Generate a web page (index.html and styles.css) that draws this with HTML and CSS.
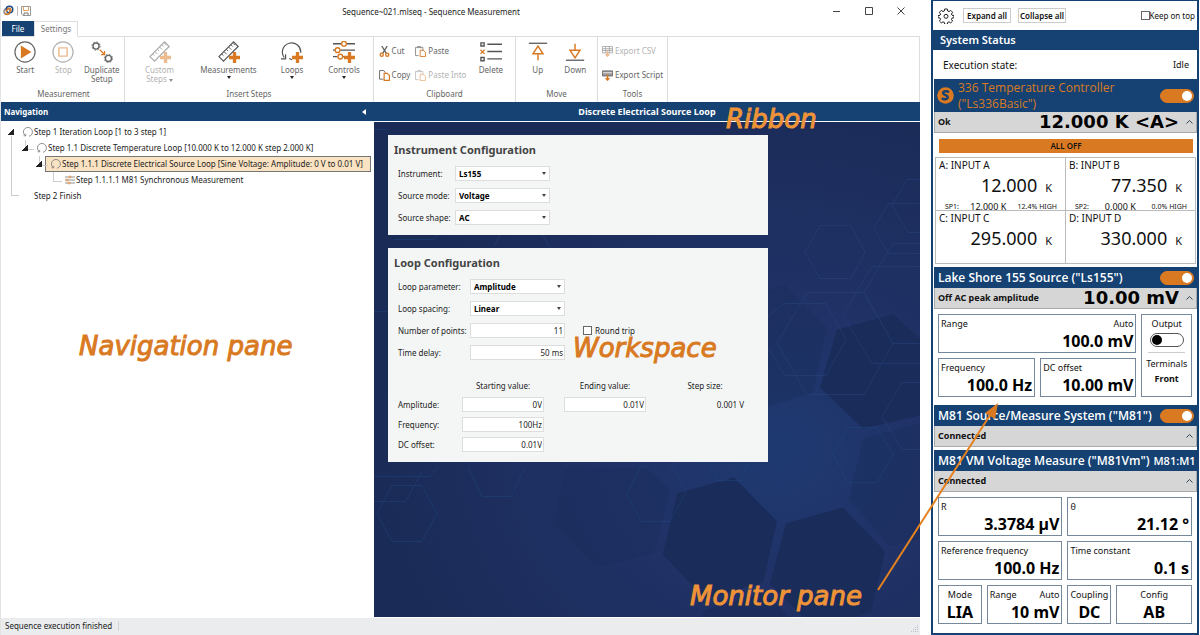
FILE: index.html
```html
<!DOCTYPE html>
<html lang="en">
<head>
    <meta charset="UTF-8">
    <meta name="viewport" content="width=device-width, initial-scale=1.0">
    <title>Sequence~021.mlseq - Sequence Measurement</title>
    <link rel="stylesheet" href="styles.css">
</head>
<body>
    <div class="app">
        <header class="titlebar">
            <div class="quick">
                <svg width="11" height="11" viewBox="0 0 22 22" fill="none" stroke-width="3">
                    <circle cx="8" cy="13" r="6" stroke="#8a8f98"/>
                    <circle cx="13" cy="9" r="6.5" stroke="#1c4b8c"/>
                    <path d="M3 16a6 6 0 0 0 9 1l4-7a4 4 0 0 0-6-3l-4 6" stroke="#e07b22"/>
                </svg>
                <span class="divider"></span>
                <svg width="10" height="10" viewBox="0 0 20 20" fill="none">
                    <path d="M1 1h18v18H4l-3-3z" stroke="#777" stroke-width="1.5"/>
                    <path d="M5 1v8h10V1" stroke="#e9a15f" stroke-width="2"/>
                    <path d="M6 19v-5h8v5" stroke="#777" stroke-width="2"/>
                </svg>
            </div>
            <h1>Sequence~021.mlseq - Sequence Measurement</h1>
            <div class="window-buttons">
                <button aria-label="Minimize"><svg width="8" height="8"><path d="M0 4.5h7" stroke="#444"/></svg></button>
                <button aria-label="Maximize"><svg width="8" height="8"><path d="M.5.5h7v7h-7z" fill="none" stroke="#444"/></svg></button>
                <button aria-label="Close"><svg width="8" height="8"><path d="M.5.5l7 7M7.5.5l-7 7" stroke="#444"/></svg></button>
            </div>
        </header>

        <nav class="tabs">
            <button class="tab file">File</button>
            <button class="tab current">Settings</button>
        </nav>

        <div class="ribbon">
            <section class="group measurement">
                <div class="tools">
                    <button class="tool">
                        <svg viewBox="0 0 24 24" fill="none"><circle cx="12" cy="12" r="11" stroke="#666" stroke-width="1.3"/><path d="M7.5 5v14l11.5-7z" fill="#d97a22"/></svg>
                        Start
                    </button>
                    <button class="tool" disabled>
                        <svg viewBox="0 0 24 24" fill="none"><circle cx="12" cy="12" r="11" stroke="#666" stroke-width="1.3"/><path d="M7.5 7.5h9v9h-9z" stroke="#d97a22" stroke-width="1.6"/></svg>
                        Stop
                    </button>
                    <button class="tool">
                        <svg viewBox="0 0 24 24" fill="none" stroke="#666"><circle cx="5.5" cy="5.5" r="3.3" stroke-width="1.5"/><circle cx="5.5" cy="5.5" r="4.5" stroke-dasharray="1.7 1.83"/><circle cx="19" cy="19" r="3.3" stroke-width="1.5"/><circle cx="19" cy="19" r="4.5" stroke-dasharray="1.7 1.83"/><path d="M9.5 9.5l5 5M14.8 11v3.8H11" stroke="#d97a22" stroke-width="1.3"/></svg>
                        Duplicate<br>Setup
                    </button>
                </div>
                <h2>Measurement</h2>
            </section>
            <section class="group insert">
                <div class="tools">
                    <button class="tool custom" disabled>
                        <svg viewBox="0 0 24 24" fill="none"><path d="M1 17L17 1l5 5L6 22z" stroke="#555" stroke-width="1.3"/><path d="M4 14l2 2M6.5 11.5l3 3M9 9l2 2M11.5 6.5l3 3M14 4l2 2M16.5 2.5l2 2" stroke="#555"/><path d="M18 12v12M12 18h12" stroke="#d97a22" stroke-width="3.6"/></svg>
                        <span>Custom<br>Steps <i class="down"></i></span>
                    </button>
                    <button class="tool wide">
                        <svg viewBox="0 0 24 24" fill="none"><path d="M1 17L17 1l5 5L6 22z" stroke="#555" stroke-width="1.3"/><path d="M4 14l2 2M6.5 11.5l3 3M9 9l2 2M11.5 6.5l3 3M14 4l2 2M16.5 2.5l2 2" stroke="#555"/><path d="M18 12v12M12 18h12" stroke="#d97a22" stroke-width="3.6"/></svg>
                        Measurements
                        <i class="down"></i>
                    </button>
                    <button class="tool">
                        <svg viewBox="0 0 24 24" fill="none"><path d="M3.5 18A10 10 0 1 1 21.5 13M12 20.5L9 19M0 19.5h5v-5" stroke="#555" stroke-width="1.3"/><path d="M18 12v12M12 18h12" stroke="#d97a22" stroke-width="3.6"/></svg>
                        Loops
                        <i class="down"></i>
                    </button>
                    <button class="tool">
                        <svg viewBox="0 0 24 24" fill="none"><path d="M0 3h9M15 3h9M8 10h16M0 10h2M0 17h5M11 17h3" stroke="#555" stroke-width="1.4"/><g stroke="#d97a22" stroke-width="1.5"><circle cx="12" cy="3" r="2.6"/><circle cx="5" cy="10" r="2.6"/><circle cx="8" cy="17" r="2.6"/></g><path d="M18 12v12M12 18h12" stroke="#d97a22" stroke-width="3.6"/></svg>
                        Controls
                        <i class="down"></i>
                    </button>
                </div>
                <h2>Insert Steps</h2>
            </section>
            <section class="group clipboard">
                <div class="tools">
                    <div class="stack">
                        <button class="mini">
                            <svg viewBox="0 0 12 12" fill="none"><path d="M3 0l5 8M9 0L4 8" stroke="#666" stroke-width="1.5"/><circle cx="3" cy="9.5" r="1.7" stroke="#d97a22" stroke-width="1.5"/><circle cx="9" cy="9.5" r="1.7" stroke="#d97a22" stroke-width="1.5"/></svg>
                            Cut
                        </button>
                        <button class="mini">
                            <svg viewBox="0 0 12 12" fill="none"><path d="M5 10H.6V.6h4.5L7 3" stroke="#666"/><path d="M5.6 3.6H9L11.4 6v5.4H5.6z" stroke="#d97a22" stroke-width="1.3"/></svg>
                            Copy
                        </button>
                    </div>
                    <div class="stack">
                        <button class="mini">
                            <svg viewBox="0 0 12 12" fill="none"><path d="M4 10.5H.6v-9h8v4M3 2.5V.6h3v1.9" stroke="#888"/><path d="M5.6 4.6H9L11.4 7v4.4H5.6z" stroke="#d97a22"/></svg>
                            Paste
                        </button>
                        <button class="mini" disabled>
                            <svg viewBox="0 0 12 12" fill="none"><path d="M4 10.5H.6v-9h8v4M3 2.5V.6h3v1.9" stroke="#888"/><path d="M5.6 4.6H9L11.4 7v4.4H5.6z" stroke="#d97a22"/></svg>
                            Paste Into
                        </button>
                    </div>
                    <button class="tool">
                        <svg viewBox="0 0 24 24" fill="none"><path d="M1 2h3.5v3.5H1zM1 18h3.5v3.5H1zM8 3.5h16M8 11.5h16M8 19.5h16" stroke="#555" stroke-width="1.5"/><path d="M.5 9.5L5 14M5 9.5L.5 14" stroke="#d97a22" stroke-width="1.4"/></svg>
                        Delete
                    </button>
                </div>
                <h2>Clipboard</h2>
            </section>
            <section class="group move">
                <div class="tools">
                    <button class="tool">
                        <svg viewBox="0 0 24 24" fill="none"><path d="M2 2.5h20" stroke="#666" stroke-width="1.5"/><path d="M12 21v-7M12 5.5L6.5 14h11z" stroke="#d97a22" stroke-width="1.6"/></svg>
                        Up
                    </button>
                    <button class="tool">
                        <svg viewBox="0 0 24 24" fill="none"><path d="M2 21h20" stroke="#666" stroke-width="1.5"/><path d="M12 3v7M12 18.5L6.5 10h11z" stroke="#d97a22" stroke-width="1.6"/></svg>
                        Down
                    </button>
                </div>
                <h2>Move</h2>
            </section>
            <section class="group export">
                <div class="tools">
                    <div class="stack">
                        <button class="mini" disabled>
                            <svg viewBox="0 0 12 12" fill="none"><path d="M.5.5h11v7H.5zM.5 3h11M.5 5h11M4 .5v7M8 .5v7" stroke="#555"/><path d="M6 5v6M4 9l2 2 2-2" stroke="#d97a22" stroke-width="1.6"/></svg>
                            Export CSV
                        </button>
                        <button class="mini">
                            <svg viewBox="0 0 12 12" fill="none"><path d="M.5 1h11v5.5H.5z" fill="#999" stroke="#666"/><path d="M1 3h10" stroke="#eee"/><path d="M6 5v6M4 9l2 2 2-2" stroke="#d97a22" stroke-width="1.6"/></svg>
                            Export Script
                        </button>
                    </div>
                </div>
                <h2>Tools</h2>
            </section>
        </div>

        <div class="panes">
            <aside class="navigation">
                <h2 class="pane-title">Navigation <button class="collapse" aria-label="Collapse navigation"></button></h2>
                <ul class="tree">
                    <li>
                        <div class="row"><i class="expander"></i><a href="#step1"><svg class="loop" viewBox="0 0 10 10"><path d="M2.2 8.5A4.5 4.5 0 1 1 6 9.3M.5 8.8h2.2v-2"/></svg>Step 1 Iteration Loop [1 to 3 step 1]</a></div>
                        <ul>
                            <li>
                                <div class="row"><i class="expander"></i><a href="#step11"><svg class="loop" viewBox="0 0 10 10"><path d="M2.2 8.5A4.5 4.5 0 1 1 6 9.3M.5 8.8h2.2v-2"/></svg>Step 1.1 Discrete Temperature Loop [10.000 K to 12.000 K step 2.000 K]</a></div>
                                <ul>
                                    <li>
                                        <div class="row"><i class="expander"></i><a href="#step111" class="selected"><svg class="loop" viewBox="0 0 10 10"><path d="M2.2 8.5A4.5 4.5 0 1 1 6 9.3M.5 8.8h2.2v-2"/></svg>Step 1.1.1 Discrete Electrical Source Loop [Sine Voltage: Amplitude: 0 V to 0.01 V]</a></div>
                                        <ul>
                                            <li>
                                                <div class="row"><i class="expander leaf"></i><a href="#step1111"><svg class="loop" viewBox="0 0 10 10"><path d="M0 2h10M0 5h10M0 8h10"/><g class="knobs"><circle cx="5" cy="2" r="1"/><circle cx="2" cy="5" r="1"/><circle cx="4" cy="8" r="1"/></g></svg>Step 1.1.1.1 M81 Synchronous Measurement</a></div>
                                            </li>
                                        </ul>
                                    </li>
                                </ul>
                            </li>
                        </ul>
                    </li>
                    <li>
                        <div class="row"><i class="expander leaf"></i><a href="#step2" class="plain">Step 2 Finish</a></div>
                    </li>
                </ul>
            </aside>

            <main class="workspace">
                <h2 class="pane-title">Discrete Electrical Source Loop</h2>
                <div class="canvas">
                    <svg class="backdrop" viewBox="0 0 546 496" preserveAspectRatio="xMidYMid slice">
                        <defs>
                            <radialGradient id="glow" cx="0.74" cy="0.66" r="0.75">
                                <stop offset="0" stop-color="#1e3a71"/>
                                <stop offset="0.35" stop-color="#203267"/>
                                <stop offset="1" stop-color="#1a2b57"/>
                            </radialGradient>
                        </defs>
                        <rect width="546" height="496" fill="url(#glow)"/>
                        <g fill="#1a2c59">
                            <path d="M303 372l57-16 43 44-14 61-58 16-42-44z"/>
                            <path d="M412 402l57-16 42 44-14 61-57 15-44-44z"/>
                            <path d="M463 208l56-15 27 24v77l-57 13-43-41z"/>
                            <path d="M328 497l2-8 60-18 26 26z" opacity=".6"/>
                            <path d="M192 347h81l23 21-16 63-58 15-42-43z" opacity=".4"/>
                            <path d="M489 317l57-15v115l-31 7-40-46z" opacity=".4"/>
                            <path d="M394 169l17-5 42 42-14 65-45 14z" opacity=".4"/>
                        </g>
                        <g fill="none" stroke="#1c4a80" opacity=".45">
                            <path d="M18 364h30l15 28-15 28H18L3 392z"/>
                            <path d="M94 346l14 29h29l14-29"/>
                            <path d="M0 355h56l8-10M0 380h32l16-30"/>
                            <path d="M267 345l-14 28 14 27h29l16-29-15-28"/>
                            <path d="M335 340l8 19h24l8-19"/>
                            <path d="M474 306h29l16 27-16 28h-29l-15-28z"/>
                            <path d="M20 118h40l12-20M120 125l10-18h35l10 18"/>
                            <path d="M0 190h13M0 8h12"/>
                        </g>
                        <g fill="none" stroke="#2a4a86" opacity=".4">
                            <path d="M446 104h31l14 27-14 26h-31l-15-26z"/>
                            <path d="M433 171h57l29 51-29 51h-57l-30-51z"/>
                            <path d="M546 145h-48l-29 49 29 48h48"/>
                            <path d="M546 82h-32l-14 25 14 25h32"/>
                            <path d="M546 58h-13l-15 26 16 27h12"/>
                            <path d="M546 122h-27l-29 49 29 51h27"/>
                            <path d="M394 195l16-13h42l20 36-20 36h-41l-17-28"/>
                            <path d="M546 261h-18l-20 34 20 33h18"/>
                        </g>
                    </svg>

                    <form class="card">
                        <h3>Instrument Configuration</h3>
                        <div class="fields">
                            <label for="instrument">Instrument:</label>
                            <div class="select"><select id="instrument"><option>Ls155</option></select></div>
                            <label for="mode">Source mode:</label>
                            <div class="select"><select id="mode"><option>Voltage</option></select></div>
                            <label for="shape">Source shape:</label>
                            <div class="select"><select id="shape"><option>AC</option></select></div>
                        </div>
                    </form>

                    <form class="card loop-card">
                        <h3>Loop Configuration</h3>
                        <div class="fields">
                            <label for="parameter">Loop parameter:</label>
                            <div class="select"><select id="parameter"><option>Amplitude</option></select></div>
                            <label for="spacing">Loop spacing:</label>
                            <div class="select"><select id="spacing"><option>Linear</option></select></div>
                            <label for="points">Number of points:</label>
                            <input type="text" id="points" value="11">
                            <label class="check"><input type="checkbox"> Round trip</label>
                            <label for="delay">Time delay:</label>
                            <input type="text" id="delay" value="50 ms">
                        </div>
                        <div class="values">
                            <span></span>
                            <span class="head">Starting value:</span>
                            <span class="head">Ending value:</span>
                            <span class="head">Step size:</span>
                            <label for="amplitude">Amplitude:</label>
                            <input type="text" id="amplitude" value="0V">
                            <input type="text" aria-label="Amplitude ending value" value="0.01V">
                            <output>0.001 V</output>
                            <label for="frequency">Frequency:</label>
                            <input type="text" id="frequency" value="100Hz">
                            <label for="offset">DC offset:</label>
                            <input type="text" id="offset" value="0.01V">
                        </div>
                    </form>
                </div>
            </main>
        </div>

        <footer class="statusbar">
            <span>Sequence execution finished</span>
            <svg width="8" height="8" fill="#b9c0cb"><path d="M6 0h1v1H6zM4 2h1v1H4zM6 2h1v1H6zM2 4h1v1H2zM4 4h1v1H4zM6 4h1v1H6zM0 6h1v1H0zM2 6h1v1H2zM4 6h1v1H4zM6 6h1v1H6z"/></svg>
        </footer>
    </div>

    <aside class="monitor">
        <div class="monitor-bar">
            <button class="gear" aria-label="Settings">
                <svg width="16" height="16" viewBox="0 0 24 24" fill="none" stroke="#222" stroke-width="1.5" stroke-linejoin="round"><path d="M10 1.5h4l.6 3 1.9.8 2.6-1.7 2.8 2.8-1.7 2.6.8 1.9 3 .6v3l-3 .6-.8 1.9 1.7 2.6-2.8 2.8-2.6-1.7-1.9.8-.6 3h-4l-.6-3-1.9-.8-2.6 1.7-2.8-2.8 1.7-2.6-.8-1.9-3-.6v-3l3-.6.8-1.9-1.7-2.6 2.8-2.8 2.6 1.7 1.9-.8z"/><circle cx="12" cy="12.5" r="3"/></svg>
            </button>
            <button class="small">Expand all</button>
            <button class="small">Collapse all</button>
            <label class="check"><input type="checkbox">Keep on top</label>
        </div>
        <h2 class="system">System Status</h2>
        <p class="state"><span>Execution state:</span><span>Idle</span></p>

        <section class="device">
            <h3 class="warn">
                <svg width="17" height="17" viewBox="0 0 17 17"><circle cx="8.5" cy="8.5" r="8.3" fill="#d97a22"/><path d="M12 5.2C10 3.6 6 4 6.2 6.3c.2 2 4.8 1.8 4.5 4.1-.3 2.2-3.7 2.3-6 .8" fill="none" stroke="#154273" stroke-width="2.4"/></svg>
                <span>336 Temperature Controller ("Ls336Basic")</span>
                <input type="checkbox" class="toggle" aria-label="336 Temperature Controller" checked>
            </h3>
            <div class="summary"><b>Ok</b><strong>12.000 K &lt;A&gt;</strong><button class="fold" aria-label="Fold"><svg width="7" height="4"><path d="M.5 3.5l3-3 3 3" fill="none" stroke="#345"/></svg></button></div>
            <button class="all-off">ALL OFF</button>
            <div class="inputs">
                <div class="input">
                    <h4>A: INPUT A</h4>
                    <p class="reading">12.000 <small>K</small></p>
                    <p class="setpoint"><small>SP1:</small><span>12.000 K</span><small>12.4% HIGH</small></p>
                </div>
                <div class="input">
                    <h4>B: INPUT B</h4>
                    <p class="reading">77.350 <small>K</small></p>
                    <p class="setpoint"><small>SP2:</small><span>0.000 K</span><small>0.0% HIGH</small></p>
                </div>
                <div class="input">
                    <h4>C: INPUT C</h4>
                    <p class="reading">295.000 <small>K</small></p>
                </div>
                <div class="input">
                    <h4>D: INPUT D</h4>
                    <p class="reading">330.000 <small>K</small></p>
                </div>
            </div>
        </section>

        <section class="device">
            <h3>
                <span>Lake Shore 155 Source ("Ls155")</span>
                <input type="checkbox" class="toggle" aria-label="Lake Shore 155 Source" checked>
            </h3>
            <div class="summary"><b>Off AC peak amplitude</b><strong>10.00 mV</strong><button class="fold" aria-label="Fold"><svg width="7" height="4"><path d="M.5 3.5l3-3 3 3" fill="none" stroke="#345"/></svg></button></div>
            <div class="tiles source">
                <div class="tile range"><span>Range</span><span>Auto</span><b>100.0 mV</b></div>
                <div class="tile"><span>Frequency</span><b>100.0 Hz</b></div>
                <div class="tile"><span>DC offset</span><b>10.00 mV</b></div>
                <div class="tile terminals">
                    <label for="output">Output</label>
                    <input type="checkbox" class="toggle" id="output">
                    <hr>
                    <span>Terminals</span>
                    <strong>Front</strong>
                </div>
            </div>
        </section>

        <section class="device">
            <h3>
                <span>M81 Source/Measure System ("M81")</span>
                <input type="checkbox" class="toggle" aria-label="M81 Source/Measure System" checked>
            </h3>
            <div class="summary"><b>Connected</b><button class="fold" aria-label="Fold"><svg width="7" height="4"><path d="M.5 3.5l3-3 3 3" fill="none" stroke="#345"/></svg></button></div>
        </section>

        <section class="device">
            <h3><span>M81 VM Voltage Measure ("M81Vm")</span><em>M81:M1</em></h3>
            <div class="summary"><b>Connected</b><button class="fold" aria-label="Fold"><svg width="7" height="4"><path d="M.5 3.5l3-3 3 3" fill="none" stroke="#345"/></svg></button></div>
            <div class="tiles measure">
                <div class="tile half"><span>R</span><b>3.3784 µV</b></div>
                <div class="tile half"><span>θ</span><b>21.12 °</b></div>
                <div class="tile half"><span>Reference frequency</span><b>100.0 Hz</b></div>
                <div class="tile half"><span>Time constant</span><b>0.1 s</b></div>
                <div class="tile center"><span>Mode</span><b>LIA</b></div>
                <div class="tile"><span>Range</span><span>Auto</span><b>10 mV</b></div>
                <div class="tile center"><span>Coupling</span><b>DC</b></div>
                <div class="tile center"><span>Config</span><b>AB</b></div>
            </div>
        </section>
    </aside>

    <!-- callouts over the window -->
    <div class="note ribbon-note">Ribbon</div>
    <div class="note navigation-note">Navigation pane</div>
    <div class="note workspace-note">Workspace</div>
    <div class="note monitor-note">Monitor pane</div>
    <svg class="arrow" width="124" height="190" viewBox="0 0 124 190"><path d="M2 188L116 10" stroke="#e5821f" stroke-width="2"/><path d="M122 1l-3 16-10-6z" fill="#d97a22"/></svg>
</body>
</html>
```
FILE: styles.css
```css
* {
    margin: 0;
    padding: 0;
    box-sizing: border-box;
}

body {
    font-family: "Noto Sans", "Open Sans", sans-serif;
    font-size: 8px;
    line-height: 10px;
    color: #222;
    background: #fff;
    display: flex;
    gap: 11px;
    min-height: 100vh;
    position: relative;
    overflow: hidden;
}

button, input, select {
    font: inherit;
    color: inherit;
}

button {
    background: none;
    border: none;
}

ul {
    list-style: none;
}

a {
    color: inherit;
    text-decoration: none;
}

.app {
    flex: 1;
    min-width: 0;
    display: flex;
    flex-direction: column;
    border-left: 1px solid #e3e3e3;
}

/* title bar */
.titlebar {
    display: grid;
    grid-template-columns: 1fr auto 1fr;
    align-items: center;
    height: 21px;
    padding: 0 15px 0 2px;
}

.titlebar h1 {
    font-size: 8px;
    font-weight: normal;
    padding-top: 3px;
    padding-right: 46px;
}

.quick {
    display: flex;
    align-items: center;
    gap: 3px;
}

.divider {
    width: 1px;
    height: 10px;
    background: #bbb;
}

.window-buttons {
    display: flex;
    justify-content: flex-end;
    gap: 24px;
}

.window-buttons button,
.window-buttons svg {
    display: block;
    width: 8px;
    height: 8px;
}

/* ribbon */
.tabs {
    display: flex;
    height: 16px;
    padding-left: 1px;
    border-bottom: 1px solid #ddd;
}

.tab {
    height: 16px;
    width: 44px;
    color: #777;
}

.tab.file {
    width: 32px;
    height: 15px;
    background: #154273;
    color: #fff;
}

.tab.current {
    border: 1px solid #ddd;
    border-bottom-color: #fff;
    background: #fff;
}

.ribbon {
    display: flex;
    height: 65px;
    border-right: 1px solid #ddd;
    color: #666;
}

.group {
    display: flex;
    flex-direction: column;
    justify-content: space-between;
    border-right: 1px solid #ddd;
    padding: 4px 3px 3px;
}

.group h2 {
    font-size: 8px;
    font-weight: normal;
    text-align: center;
}

.tools {
    display: flex;
    justify-content: center;
}

.measurement {
    width: 124px;
    padding-left: 5px;
}

.insert {
    width: 249px;
}

.insert .tools {
    gap: 13px;
}

.clipboard {
    width: 142px;
}

.clipboard .tools {
    gap: 5px;
}

.move {
    width: 82px;
}

.export {
    width: 70px;
}

.tool {
    display: flex;
    flex-direction: column;
    align-items: center;
    width: 39px;
    line-height: 9px;
}

.tool.custom {
    width: 50px;
}

.tool.wide {
    width: 62px;
}

.tool svg {
    width: 22px;
    height: 22px;
    margin-bottom: 2px;
}

.tool:disabled,
.mini:disabled {
    opacity: 0.5;
}

.down {
    display: inline-block;
    border: 2px solid transparent;
    border-top: 3px solid #222;
    border-bottom: none;
}

.tool > .down {
    margin-top: 2px;
}

.stack {
    display: flex;
    flex-direction: column;
    gap: 12px;
    padding-top: 4px;
}

.mini {
    display: flex;
    align-items: center;
    gap: 2px;
    height: 12px;
    white-space: nowrap;
}

.mini svg {
    width: 11px;
    height: 11px;
}

/* panes */
.panes {
    flex: 1;
    display: flex;
}

.pane-title {
    display: flex;
    align-items: center;
    justify-content: center;
    height: 20px;
    background: #154273;
    color: #fff;
    font-size: 9px;
    border-bottom: 1px solid #fff;
}

.navigation {
    width: 373px;
}

.navigation .pane-title {
    justify-content: space-between;
    padding: 0 8px 0 3px;
    font-size: 8px;
}

.collapse {
    border: 3px solid transparent;
    border-right: 4px solid #fff;
    border-left: none;
}

.tree {
    position: relative;
    padding: 2px 3px 0 5px;
}

.tree::before {
    content: "";
    position: absolute;
    left: 10px;
    top: 14px;
    bottom: 8px;
    width: 7px;
    border-left: 1px solid #ccc;
    border-bottom: 1px solid #ccc;
}

.tree ul {
    padding-left: 14px;
}

.tree ul li {
    position: relative;
}

.tree ul li::before {
    content: "";
    position: absolute;
    left: 5px;
    top: 0;
    width: 8px;
    height: 9px;
    border-left: 1px solid #ccc;
    border-bottom: 1px solid #ccc;
}

.row {
    display: flex;
    align-items: center;
    height: 16px;
}

.row a {
    flex: 1;
    display: flex;
    align-items: center;
    gap: 1px;
    height: 16px;
    padding-left: 5px;
    border: 1px solid transparent;
    white-space: nowrap;
}

.row a.selected {
    background: #fae3c3;
    border-color: #777;
}

.row a.plain {
    padding-left: 16px;
}

.expander {
    position: relative;
    width: 6px;
    height: 6px;
    margin: 0 3px 0 2px;
    background: linear-gradient(135deg, transparent 50%, #222 50%);
}

.expander.leaf {
    background: none;
}

.loop {
    width: 10px;
    height: 10px;
    fill: none;
    stroke: #777;
    stroke-width: 0.8;
}

.knobs {
    stroke: #d97a22;
    fill: #fff;
}

/* workspace */
.workspace {
    flex: 1;
    min-width: 0;
    display: flex;
    flex-direction: column;
}

.canvas {
    flex: 1;
    position: relative;
    display: flex;
    flex-direction: column;
    align-items: flex-start;
    gap: 13px;
    padding: 13px 14px;
    background: #1b2d5b;
}

.backdrop {
    position: absolute;
    inset: 0;
    width: 100%;
    height: 100%;
}

.card {
    position: relative;
    width: 100%;
    max-width: 380px;
    padding: 9px 6px 10px;
    background: #f4f6f6;
}

.card h3 {
    font-size: 11px;
    line-height: 12px;
    color: #444;
    margin-bottom: 10px;
}

.fields {
    display: grid;
    grid-template-columns: 53px 95px 1fr;
    column-gap: 4px;
    row-gap: 7px;
    align-items: center;
    padding-left: 4px;
}

.fields > label {
    grid-column: 1;
    white-space: nowrap;
}

.fields > .check {
    grid-column: 3;
    padding-left: 14px;
}

.loop-card .fields {
    grid-template-columns: 68px 95px 1fr;
}

.card input[type="text"],
.select select {
    width: 100%;
    height: 15px;
    background: #fff;
    border: 1px solid #ddd;
}

.card input[type="text"] {
    text-align: right;
    padding-right: 1px;
}

.select {
    position: relative;
}

.select select {
    display: block;
    appearance: none;
    font-weight: bold;
    color: #000;
    padding-left: 3px;
}

.select::after {
    content: "";
    position: absolute;
    right: 4px;
    top: 6px;
    border: 2px solid transparent;
    border-top: 3px solid #444;
    border-bottom: none;
}

.check {
    display: flex;
    align-items: center;
    gap: 3px;
    white-space: nowrap;
}

.check input {
    appearance: none;
    width: 9px;
    height: 9px;
    background: #fff;
    border: 1px solid #666;
}

.values {
    display: grid;
    grid-template-columns: 44px 82px 82px 78px;
    column-gap: 20px;
    row-gap: 5px;
    align-items: center;
    padding: 21px 0 0 4px;
}

.values label {
    grid-column: 1;
    white-space: nowrap;
}

.values .head {
    text-align: center;
    margin-bottom: 1px;
}

.values output {
    text-align: right;
}

.statusbar {
    display: flex;
    justify-content: space-between;
    align-items: center;
    height: 18px;
    padding: 0 1px 2px 4px;
    background: #ebecee;
    border-top: 1px solid #fff;
}

.statusbar span {
    padding-right: 6px;
    border-right: 1px solid #d5d5d5;
}

.statusbar svg {
    align-self: flex-end;
}

/* monitor */
.monitor {
    width: 268px;
    margin-right: 1px;
    border: 2px solid #154273;
    border-top-width: 1px;
    font-size: 9px;
    line-height: 12px;
    color: #111;
}

.monitor-bar {
    display: flex;
    align-items: center;
    gap: 7px;
    height: 29px;
    padding: 0 2px 0 5px;
    font-size: 8px;
}

.monitor-bar .check {
    margin-left: auto;
    gap: 0;
}

.gear svg {
    display: block;
}

.gear {
    margin-right: 2px;
}

.small {
    height: 15px;
    width: 48px;
    border: 1px solid #ccc;
    font-weight: 600;
    white-space: nowrap;
}

.system {
    height: 20px;
    padding-left: 7px;
    background: #154273;
    color: #fff;
    font-size: 11px;
    font-weight: 600;
    line-height: 20px;
}

.state {
    display: flex;
    justify-content: space-between;
    align-items: center;
    height: 29px;
    padding: 0 8px 0 10px;
    font-size: 10px;
}

.state span:last-child {
    font-size: 9px;
}

.device {
    margin: 0 0 3px 1px;
}

.device h3 {
    display: flex;
    align-items: center;
    gap: 4px;
    min-height: 21px;
    padding: 0 3px 0 4px;
    background: #154273;
    color: #fff;
    font-family: "Open Sans", sans-serif;
    font-size: 12px;
    font-weight: 600;
    line-height: 16px;
}

.device h3 span {
    flex: 1;
    white-space: nowrap;
}

.device h3 em {
    font-style: normal;
    font-size: 11px;
}

.device h3.warn {
    color: #d97a22;
    padding-left: 3px;
    height: 33px;
    font-weight: 500;
}

.device h3.warn span {
    white-space: normal;
}

.toggle {
    appearance: none;
    width: 34px;
    height: 14px;
    padding: 1px;
    border: 1px solid #d97a22;
    border-radius: 7px;
    background: #d97a22;
    display: flex;
    justify-content: flex-end;
}

.toggle::before {
    content: "";
    width: 10px;
    height: 10px;
    border-radius: 5px;
    background: #fff;
}

.toggle:not(:checked) {
    justify-content: flex-start;
    border-color: #555;
    background: #fff;
}

.toggle:not(:checked)::before {
    background: #000;
}

.summary {
    display: flex;
    align-items: center;
    height: 21px;
    padding: 0 3px;
    background: #d6d6d6;
    border: 1px solid #aaa;
    border-top: none;
}

.summary b {
    flex: 1;
}

.summary strong {
    font-family: "DejaVu Sans", sans-serif;
    font-size: 18px;
    line-height: 20px;
    color: #000;
}

.fold {
    margin-left: 7px;
}

.fold svg {
    display: block;
}

.all-off {
    display: block;
    width: calc(100% - 9px);
    height: 14px;
    margin: 6px 4px 4px 5px;
    background: #d97a22;
    font-size: 8px;
    font-weight: 600;
}

.inputs {
    display: grid;
    grid-template-columns: 1fr 1fr;
    grid-auto-rows: 53px;
    margin: 0 1px;
    border: solid #bbb;
    border-width: 1px 0 0 1px;
}

.input {
    border: solid #bbb;
    border-width: 0 1px 1px 0;
    padding: 1px 3px 0;
}

.input h4 {
    font-size: 10px;
    font-weight: normal;
}

.reading {
    display: flex;
    justify-content: flex-end;
    align-items: baseline;
    gap: 8px;
    padding-right: 10px;
    font-size: 18px;
    line-height: 28px;
}

.reading small {
    font-size: 11px;
}

.setpoint {
    display: flex;
    justify-content: space-between;
    padding: 0 5px 0 6px;
    line-height: 10px;
}

.setpoint small {
    font-size: 7px;
}

.tiles {
    display: grid;
    gap: 5px;
    padding: 5px 5px 5px 4px;
    grid-auto-rows: 39px;
}

.source {
    grid-template-columns: 98fr 97fr 51fr;
}

.measure {
    grid-template-columns: 44fr 76fr 44fr 76fr;
}

.tile {
    display: flex;
    flex-wrap: wrap;
    align-content: flex-start;
    justify-content: space-between;
    padding: 3px 2px 0;
    border: 1px solid #75889c;
    white-space: nowrap;
}

.tile b {
    width: 100%;
    text-align: right;
    font-size: 16px;
    line-height: 22px;
    color: #000;
}

.tile.center {
    justify-content: center;
}

.tile.center b {
    text-align: center;
}

.range,
.half {
    grid-column: span 2;
}

.terminals {
    grid-column: 3;
    grid-row: 1 / span 2;
    flex-direction: column;
    flex-wrap: nowrap;
    justify-content: flex-start;
    align-items: center;
    gap: 3px;
}

.terminals hr {
    width: 37px;
    border: none;
    border-top: 1px solid #ccc;
    margin: 2px 0;
}

/* callouts */
.note {
    position: absolute;
    font-family: "DejaVu Sans", sans-serif;
    font-style: italic;
    font-size: 26px;
    line-height: 20px;
    color: #d97a22;
    -webkit-text-stroke: 1px #d97a22;
    white-space: nowrap;
}

.ribbon-note {
    left: 726px;
    top: 109px;
}

.navigation-note {
    left: 79px;
    top: 336px;
}

.workspace-note {
    left: 573px;
    top: 338px;
}

.monitor-note {
    left: 690px;
    top: 586px;
}

.ribbon-note,
.monitor-note {
    color: #ee9338;
    -webkit-text-stroke-color: #ee9338;
}

.arrow {
    position: absolute;
    left: 876px;
    top: 402px;
}
```
